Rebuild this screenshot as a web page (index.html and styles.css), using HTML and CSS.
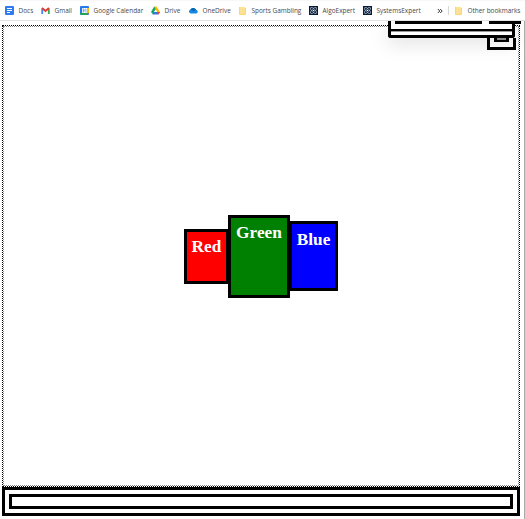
FILE: index.html
```
<!DOCTYPE html>
<html lang="en">
<head>
<meta charset="utf-8">
<title>Colors</title>
<link rel="stylesheet" href="styles.css">
</head>
<body>
<nav class="bookmarks">
  <a class="bm docs"><svg viewBox="0 0 9 9"><rect width="9" height="9" rx="1" fill="#2f7bef"/><path d="M2 2.5h5M2 4.5h5M2 6.5h3" stroke="#fff"/></svg><span>Docs</span></a>
  <a class="bm gmail"><svg viewBox="0 0 9 9"><path d="M1.2 8V2.5" stroke="#4285f4" stroke-width="1.8"/><path d="M7.8 8V2.5" stroke="#34a853" stroke-width="1.8"/><path d="M1 2l3.5 3L8 2" fill="none" stroke="#e33b2e" stroke-width="2"/></svg><span>Gmail</span></a>
  <a class="bm calendar"><svg viewBox="0 0 9 9"><rect width="9" height="9" rx="1" fill="#2878e8"/><path d="M7 2h2v5H7z" fill="#fbbc04"/><path d="M0 7h7v2H1L0 8z" fill="#23a455"/><path d="M7 7h2L7 9z" fill="#ea4335"/><path d="M2 2h5v5H2z" fill="#fff"/><path d="M2.5 3h1.5v3H2.5M2.7 4.5H4M5.2 3.3l.7-.4V6.5" fill="none" stroke="#4285f4" stroke-width=".7"/></svg><span>Google Calendar</span></a>
  <a class="bm drive"><svg viewBox="0 0 9 9"><path d="M3 .7h1.6L6 3 2 8.5 0 6z" fill="#16a765"/><path d="M3.3.7h2.5L9 6H6.2z" fill="#fbbc04"/><path d="M2.8 6H9L7.5 8.5h-6z" fill="#3478e5"/><path d="M6.2 6H9L7.5 8.5z" fill="#ea4335"/><path d="M4.5 3.2L6 6H3z" fill="#fff"/></svg><span>Drive</span></a>
  <a class="bm onedrive"><svg viewBox="0 0 9 9"><path d="M2 7.5a2 2 0 0 1-.6-3.9A3.1 3.1 0 0 1 7 3.8a1.9 1.9 0 0 1 .4 3.7z" fill="#1689dc"/><path d="M1.4 3.6A3.1 3.1 0 0 1 7 3.8L4.5 5z" fill="#0862b5"/></svg><span>OneDrive</span></a>
  <a class="bm sports"><svg viewBox="0 0 9 9"><path d="M1 1h6v7H1z" fill="#fde293"/><path d="M1.5 1v7.5H7.5V2" fill="none" stroke="#f6d775"/></svg><span>Sports Gambling</span></a>
  <a class="bm algo"><svg viewBox="0 0 9 9"><rect width="9" height="9" fill="#071a38"/><g fill="none" stroke="#b4c0ce" stroke-width=".7"><ellipse cx="4.5" cy="4.5" rx="4" ry="1.7" transform="rotate(45 4.5 4.5)"/><ellipse cx="4.5" cy="4.5" rx="4" ry="1.7" transform="rotate(-45 4.5 4.5)"/></g><circle cx="4.5" cy="4.5" r=".8" fill="#fff"/></svg><span>AlgoExpert</span></a>
  <a class="bm systems"><svg viewBox="0 0 9 9"><rect width="9" height="9" fill="#071a38"/><g fill="none" stroke="#b4c0ce" stroke-width=".7"><ellipse cx="4.5" cy="4.5" rx="4" ry="1.7" transform="rotate(45 4.5 4.5)"/><ellipse cx="4.5" cy="4.5" rx="4" ry="1.7" transform="rotate(-45 4.5 4.5)"/></g><circle cx="4.5" cy="4.5" r=".8" fill="#fff"/></svg><span>SystemsExpert</span></a>
  <svg class="more" viewBox="0 0 6 6"><path d="M.8 1l2 2-2 2M3.2 1l2 2-2 2" fill="none" stroke="#333"/></svg>
  <a class="bm other"><svg viewBox="0 0 9 9"><path d="M1 1h6v7H1z" fill="#fde293"/><path d="M1.5 1v7.5H7.5V2" fill="none" stroke="#f6d775"/></svg><span>Other bookmarks</span></a>
</nav>
<div class="page">
  <main class="stage">
    <div class="box red">Red</div>
    <div class="box green">Green</div>
    <div class="box blue">Blue</div>
  </main>
  <footer class="footer"><div class="footer-inner"></div></footer>
  <div class="overlay">
    <div class="panel"><div class="bars"><i class="bar wide"></i><i class="bar short"></i></div><div class="rule"></div></div>
    <div class="tab"><div class="tab-inner"></div></div>
  </div>
</div>
</body>
</html>
```
FILE: styles.css
```
* { box-sizing: border-box; }
body {
  margin: 0;
  width: 525px;
  height: 519px;
  overflow: hidden;
  background: #fff;
  display: flex;
  flex-direction: column;
}
.bookmarks {
  height: 21px;
  flex: none;
  border-bottom: 1px solid #e2e3e5;
  border-top: 1px solid #f7f7f7;
  display: grid;
  grid-template-columns: 36px 39px 71px 38px 49px 71px 54px 74px 11px auto;
  align-items: center;
  padding-left: 5px;
  font: 6.45px "Open Sans", "Noto Sans", sans-serif;
  color: #45484d;
}
.bm {
  display: flex;
  align-items: center;
  gap: 4.5px;
  white-space: nowrap;
}
.bm svg { width: 9px; height: 9px; flex: none; }
.more { width: 6px; height: 6px; }
.other { border-left: 1px solid #d5d7da; padding-left: 5px; height: 9px; }
.page {
  position: relative;
  flex: 1;
  border-right: 1px solid #aaa;
  padding: 4px 4px 3px 2px;
  display: flex;
  flex-direction: column;
}
.stage {
  flex: 1;
  border: 1px dotted #000;
  outline: 1px dotted #888;
  outline-offset: -2px;
  display: flex;
  align-items: center;
  justify-content: center;
}
.box {
  border: 3px solid #000;
  padding-top: 5px;
  color: #fff;
  font: bold 17.3px/20px "Liberation Serif", serif;
  text-align: center;
}
.red { width: 45px; height: 55px; padding-top: 5px; position: relative; top: .5px; background: #f00; }
.green { width: 62px; height: 83px; margin: 0 -1px; background: #008000; }
.blue { width: 49px; height: 70px; padding-top: 6px; background: #00f; }
.footer {
  height: 29px;
  border: 3px solid #000;
  padding: 4px;
}
.footer-inner { height: 15px; border: 3px solid #000; }
.overlay {
  position: absolute;
  left: 358px;
  top: 0;
  width: 166px;
  height: 80px;
  padding-left: 30px;
  overflow: hidden;
}
.panel {
  width: 127px;
  height: 17px;
  border: 3px solid #000;
  border-top: 0;
  border-radius: 0 0 3px 3px;
  background: #fff;
  box-shadow: 0 5px 20px rgba(0, 0, 0, .13);
}
.bars { display: flex; gap: 7px; padding-left: 4px; }
.bar { height: 3px; background: #000; flex: none; }
.wide { width: 87px; }
.short { width: 32px; }
.rule { height: 3px; margin-top: 5px; background: linear-gradient(#000 66%, #999 66%); }
.tab {
  width: 29px;
  height: 12px;
  margin-left: 99px;
  border: 3px solid #000;
  border-top: 0;
  padding: 0 4px;
}
.tab-inner {
  height: 4px;
  border: 2px solid #000;
  border-top: 0;
  border-left-width: 3px;
  border-right-width: 3px;
  background: #888;
}
```
